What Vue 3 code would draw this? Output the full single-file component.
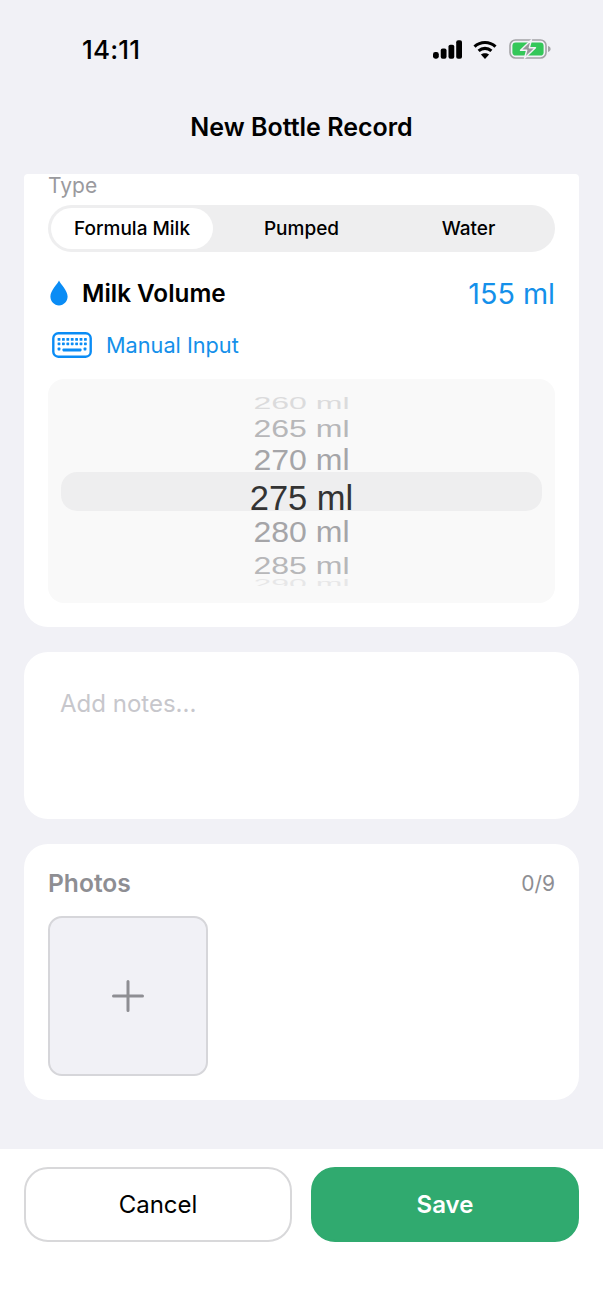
<template>
  <div class="page">
    <div class="status-bar">
      <span class="time">14:11</span>
      <div class="status-icons">
        <svg width="29" height="19" viewBox="0 0 30 19" fill="#000">
          <rect x="0" y="12" width="6" height="7" rx="2.4" />
          <rect x="8" y="8.5" width="6" height="10.5" rx="2" />
          <rect x="16" y="4.5" width="6" height="14.5" rx="2" />
          <rect x="24" y="0" width="6" height="19" rx="2" />
        </svg>
        <svg class="wifi" width="24" height="19" viewBox="0 0 24 19" fill="none" stroke="#000" stroke-width="3.1">
          <path d="M1.5 6.6C7.4 1.1 16.6 1.1 22.5 6.6" />
          <path d="M5.6 10.8C9.3 7.5 14.7 7.5 18.4 10.8" />
          <path d="M12 19L7.9 14.6C10.3 12.7 13.7 12.7 16.1 14.6Z" fill="#000" stroke="none" />
        </svg>
        <svg class="battery" width="42" height="20" viewBox="0 0 42 20" fill="none">
          <rect x="1" y="1" width="36" height="18" rx="5.5" stroke="#a3a3a6" stroke-width="1.6" />
          <rect x="3.4" y="3.4" width="31.2" height="13.2" rx="3.4" fill="#34c759" />
          <path d="M39 7v6c1.6-.4 2.6-1.6 2.6-3s-1-2.6-2.6-3z" fill="#a3a3a6" />
          <path d="M22.5 .8L11.5 11.2h6.2L15.5 19.2 26.5 8.8h-6.2z" fill="#98989c" stroke="#f2f2f7" stroke-width="1.4" stroke-linejoin="round" />
        </svg>
      </div>
    </div>
    <div class="nav-title">New Bottle Record</div>

    <div class="content">
      <section class="card card-main">
        <div class="type-label">Type</div>
        <div class="segments">
          <div
            v-for="(t, i) in types"
            :key="t"
            class="segment"
            :class="{ active: i === activeType }"
            @click="activeType = i"
          >{{ t }}</div>
        </div>

        <div class="volume-row">
          <div class="volume-title">
            <svg width="18" height="26" viewBox="0 0 18 26" fill="#0a8cf5">
              <path d="M9 0.5C10.5 4 17.6 10.6 17.6 16.6C17.6 21.7 13.8 25.4 9 25.4C4.2 25.4 0.4 21.7 0.4 16.6C0.4 10.6 7.5 4 9 0.5Z" />
            </svg>
            <span>Milk Volume</span>
          </div>
          <span class="volume-value">155 ml</span>
        </div>

        <div class="manual-row">
          <svg width="40" height="26" viewBox="0 0 40 26" fill="none">
            <rect x="1.3" y="1.3" width="37.4" height="23.4" rx="5" stroke="#0a8cf5" stroke-width="2.4" />
            <g fill="#0a8cf5">
              <template v-for="r in 2" :key="r">
                <rect v-for="c in 7" :key="c" :x="5.6 + (c - 1) * 4.4" :y="1.6 + r * 4.4" width="2.8" height="2.8" rx=".6" />
              </template>
              <rect x="5.6" y="15.6" width="2.8" height="2.8" rx=".6" />
              <rect x="31.6" y="15.6" width="2.8" height="2.8" rx=".6" />
              <rect x="10.5" y="16.4" width="19" height="3" rx=".8" />
            </g>
          </svg>
          <span>Manual Input</span>
        </div>

        <div class="picker">
          <div class="picker-band"></div>
          <div class="wheel">
            <div v-for="row in wheelRows" :key="row.label" class="wheel-row" :class="row.cls">
              <span>{{ row.label }}</span>
            </div>
          </div>
        </div>
      </section>

      <section class="card card-notes">
        <div class="notes-placeholder">Add notes...</div>
      </section>

      <section class="card card-photos">
        <div class="photos-head">
          <span class="photos-title">Photos</span>
          <span class="photos-count">0/9</span>
        </div>
        <div class="photo-add">
          <svg width="32" height="32" viewBox="0 0 32 32" stroke="#8e8e93" stroke-width="3" stroke-linecap="round">
            <path d="M16 1.5V30.5M1.5 16H30.5" />
          </svg>
        </div>
      </section>
    </div>

    <div class="footer">
      <button class="btn btn-cancel">Cancel</button>
      <button class="btn btn-save">Save</button>
    </div>
  </div>
</template>

<script setup>
import { ref } from 'vue';

const types = ['Formula Milk', 'Pumped', 'Water'];
const activeType = ref(0);

const wheelRows = [
  { label: '260 ml', cls: 'far-top' },
  { label: '265 ml', cls: 'mid-2 above' },
  { label: '270 ml', cls: 'mid-1 above' },
  { label: '275 ml', cls: 'current' },
  { label: '280 ml', cls: 'mid-1 below' },
  { label: '285 ml', cls: 'mid-2 below' },
  { label: '290 ml', cls: 'far-bottom' }
];
</script>

<style>
html, body { margin: 0; padding: 0; background: #f2f2f7; }
</style>

<style scoped>
.page {
  width: 603px;
  height: 1311px;
  display: flex;
  flex-direction: column;
  overflow: hidden;
  background: #f1f1f6;
  font-family: Inter, "Noto Sans", sans-serif;
  color: #000;
}

.status-bar {
  height: 28px;
  padding: 35px 52px 1px 82px;
  display: flex;
  align-items: center;
  justify-content: space-between;
}
.time { font-size: 26px; font-weight: 500; letter-spacing: 0.2px; }
.status-icons { display: flex; align-items: center; gap: 11px; }
.wifi { margin-right: 1px; }

.nav-title {
  margin-top: 44px;
  height: 38px;
  line-height: 38px;
  text-align: center;
  font-size: 25px;
  font-weight: 600;
}

.content {
  flex: 1;
  margin-top: 28px;
  padding: 0 24px;
  display: flex;
  flex-direction: column;
  gap: 25px;
}

.card { background: #fff; border-radius: 24px; box-sizing: border-box; }

.card-main {
  height: 453px;
  padding: 0 24px;
  border-radius: 4px 4px 24px 24px;
}
.type-label { height: 31px; line-height: 24px; font-size: 21px; color: #9a9a9e; }

.segments {
  display: grid;
  grid-template-columns: repeat(3, 1fr);
  height: 47px;
  padding: 3px;
  box-sizing: border-box;
  background: #eeeeef;
  border-radius: 24px;
}
.segment {
  display: flex;
  align-items: center;
  justify-content: center;
  font-size: 19px;
  font-weight: 500;
  border-radius: 21px;
}
.segment.active { background: #fff; margin-right: 5px; }

.volume-row {
  margin-top: 21px;
  height: 40px;
  display: flex;
  align-items: center;
  justify-content: space-between;
}
.volume-title { display: flex; align-items: center; gap: 14px; padding-left: 2px; font-size: 24.3px; font-weight: 600; }
.volume-value { font-size: 28.7px; color: #1490ea; }

.manual-row {
  margin-top: 18px;
  height: 28px;
  padding-left: 4px;
  display: flex;
  align-items: center;
  gap: 14px;
  font-size: 21.7px;
  color: #1490ea;
}

.picker {
  position: relative;
  margin-top: 20px;
  height: 224px;
  background: #f9f9f9;
  border-radius: 16px;
  overflow: hidden;
}
.picker-band {
  position: absolute;
  left: 13px;
  right: 13px;
  top: 93px;
  height: 39px;
  border-radius: 16px;
  background: #eeeeef;
}
.wheel {
  position: relative;
  height: 207px;
  padding-top: 18px;
  box-sizing: border-box;
  display: flex;
  flex-direction: column;
  align-items: center;
  overflow: hidden;
}
.wheel-row {
  display: flex;
  align-items: center;
  justify-content: center;
  white-space: nowrap;
  color: #a5a5a8;
  font-size: 32px;
  font-family: "Liberation Sans", Arial, sans-serif;
}
.wheel-row span { display: block; }

.far-top { height: 16px; overflow: hidden; opacity: .35; align-items: flex-end; }
.far-top span { transform: scale(1, .5); transform-origin: bottom; margin-bottom: -1px; }
.far-bottom { height: 10px; margin-top: -7px; overflow: hidden; opacity: .2; align-items: flex-start; }
.far-bottom span { transform: scale(1, .38); transform-origin: top; margin-top: 1px; }
.mid-2 { height: 34px; opacity: .78; }
.mid-2 span { transform: scaleY(.74); }
.mid-1 { height: 32px; }
.mid-1.above span { transform: translateY(-2px) scaleY(.92); }
.mid-1.below span { transform: translateY(-1px) scaleY(.92); }
.current { height: 41px; color: #333; font-size: 34.5px; padding-top: 1px; margin-bottom: -1px; }

.card-notes { height: 167px; padding: 35px 36px; }
.notes-placeholder { line-height: 34px; font-size: 24px; color: #c7c7cc; }

.card-photos { height: 256px; padding: 24px 24px; }
.photos-head { display: flex; align-items: center; justify-content: space-between; height: 30px; }
.photos-title { font-size: 24.6px; font-weight: 600; color: #8e8e93; }
.photos-count { font-size: 21px; color: #8e8e93; }
.photo-add {
  margin-top: 18px;
  width: 160px;
  height: 160px;
  box-sizing: border-box;
  background: #f1f1f6;
  border: 2px solid #d6d6da;
  border-radius: 14px;
  display: flex;
  align-items: center;
  justify-content: center;
}

.footer {
  height: 162px;
  box-sizing: border-box;
  padding: 18px 24px 0;
  background: #fff;
  display: flex;
  gap: 19px;
  align-items: flex-start;
}
.btn {
  flex: 1 1 0;
  min-width: 0;
  height: 75px;
  padding: 0;
  border-radius: 24px;
  font-family: inherit;
  font-size: 24px;
  box-sizing: border-box;
}
.btn-cancel { background: #fff; border: 2px solid #d8d8da; color: #000; }
.btn-save { background: #30aa6f; border: 2px solid #30aa6f; color: #fff; font-weight: 600; }
</style>
